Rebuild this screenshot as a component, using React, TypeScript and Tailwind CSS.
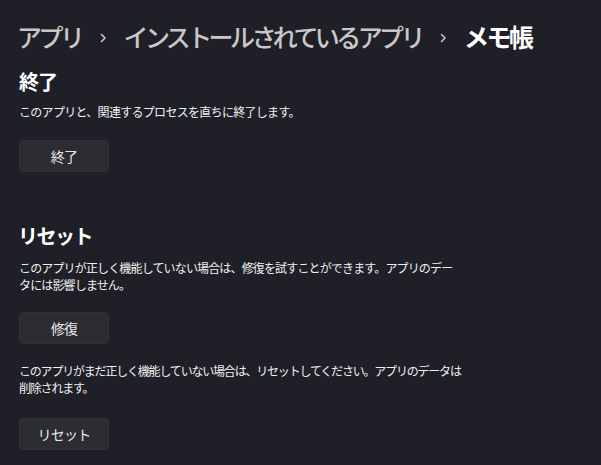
import React from 'react';

const font = { fontFamily: '"Noto Sans CJK JP", "Noto Sans", sans-serif' };

function Chevron() {
  return (
    <svg width="10" height="14" viewBox="0 0 10 14" className="mx-[16px] mt-[4px]">
      <path d="M3.5 3.5 L7 7 L3.5 10.5" stroke="#c8c8c8" strokeWidth="1.6" fill="none" strokeLinecap="round" strokeLinejoin="round" />
    </svg>
  );
}

function Btn({ label }: { label: string }) {
  return (
    <button className="w-[90px] h-[32px] rounded-[4px] bg-[#2c2c33] border border-[#32323a] text-[14px] text-[#e8e8e8] tracking-[-0.8px]">
      {label}
    </button>
  );
}

export default function App() {
  return (
    <div className="w-[601px] h-[465px] bg-[#1f1f27] text-white overflow-hidden" style={font}>
      <div className="flex items-center pl-[17px] pt-[21px] h-[51px]">
        <span className="text-[25px] leading-[30px] font-medium text-[#c8c8c8] tracking-[-3.5px]">アプリ</span>
        <Chevron />
        <span className="text-[25px] leading-[30px] font-medium text-[#c8c8c8] tracking-[-3.6px]">インストールされているアプリ</span>
        <Chevron />
        <span className="text-[25px] leading-[30px] font-bold text-white tracking-[-2.5px]">メモ帳</span>
      </div>

      <div className="pl-[19px]">
        <h2 className="mt-[19px] text-[20px] font-bold leading-[24px] tracking-[-1px]">終了</h2>
        <p className="mt-[9px] whitespace-nowrap text-[12px] leading-[18px] tracking-[-0.7px] text-[#f0f0f0]">このアプリと、関連するプロセスを直ちに終了します。</p>
        <div className="mt-[19px]"><Btn label="終了" /></div>

        <h2 className="mt-[52px] -ml-[1px] text-[20px] font-bold leading-[24px] tracking-[-1.5px]">リセット</h2>
        <p className="mt-[11px] whitespace-nowrap text-[12px] leading-[17px] tracking-[-0.85px] text-[#f0f0f0]">
          このアプリが正しく機能していない場合は、修復を試すことができます。アプリのデー
          <br />
          タには影響しません。
        </p>
        <div className="mt-[19px]"><Btn label="修復" /></div>
        <p className="mt-[18px] whitespace-nowrap text-[12px] leading-[17px] tracking-[-1.2px] text-[#f0f0f0]">
          このアプリがまだ正しく機能していない場合は、リセットしてください。アプリのデータは
          <br />
          削除されます。
        </p>
        <div className="mt-[22px]"><Btn label="リセット" /></div>
      </div>
    </div>
  );
}
